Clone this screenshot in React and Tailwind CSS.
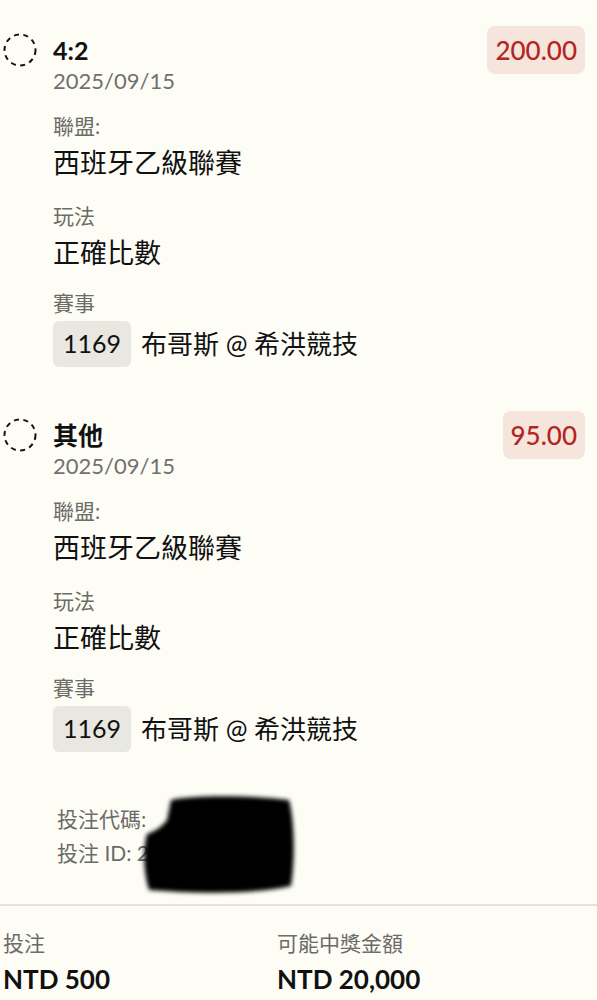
import React from "react";

const FONT = { fontFamily: 'Lato, "Noto Sans CJK TC", sans-serif' };

function DashedCircle() {
  return (
    <svg width="34" height="34" viewBox="0 0 34 34" className="shrink-0">
      <circle cx="17" cy="17" r="15.5" fill="none" stroke="#111" strokeWidth="2" strokeDasharray="5 4.5" />
    </svg>
  );
}

function Field({ label, children, className = "mt-[20px]" }) {
  return (
    <div className={className}>
      <div className="text-[21px] leading-[28px] text-[#6b6b68]">{label}</div>
      <div className="mt-[4px]">{children}</div>
    </div>
  );
}

function Bet({ title, amount, className = "" }) {
  return (
    <div className={"flex " + className}>
      <div className="w-[50px] shrink-0 pt-[3px]">
        <DashedCircle />
      </div>
      <div className="flex-1">
        <div className="flex items-center justify-between h-[40px]">
          <div className="text-[25px] font-bold leading-[40px] text-[#111]">{title}</div>
          <div className="-my-[4px] rounded-lg bg-[#f6e5dd] px-[8px] h-[48px] flex items-center text-[26px] font-medium text-[#b3261e]">
            {amount}
          </div>
        </div>
        <div className="text-[22px] leading-[22px] text-[#707070]">2025/09/15</div>
        <Field label="聯盟:">
          <div className="text-[27px] leading-[38px] text-[#111]">西班牙乙級聯賽</div>
        </Field>
        <Field label="玩法">
          <div className="text-[27px] leading-[38px] text-[#111]">正確比數</div>
        </Field>
        <Field label="賽事" className="mt-[17px]">
          <div className="flex items-center gap-[10px] mt-[2px]">
            <div className="h-[46px] rounded-md bg-[#e8e7e0] px-[10px] flex items-center text-[25px] text-[#111]">1169</div>
            <div className="text-[26px] text-[#111]">布哥斯 @ 希洪競技</div>
          </div>
        </Field>
      </div>
    </div>
  );
}

export default function App() {
  return (
    <div className="min-h-[1000px] w-[597px] bg-[#fdfdf6] overflow-hidden" style={FONT}>
      <div className="pl-[3px] pr-[12px] pt-[30px]">
        <Bet title="4:2" amount="200.00" />
        <Bet title="其他" amount="95.00" className="mt-[48px]" />
        <div className="relative mt-[50px] pl-[54px] text-[21px] leading-[34px] text-[#6b6b68]">
          <div>投注代碼: </div>
          <div>投注 ID: 24</div>
          <svg className="absolute left-[134px] top-[-10px]" width="162" height="110" viewBox="0 0 162 110">
            <defs>
              <filter id="blur" x="-10%" y="-10%" width="120%" height="120%">
                <feGaussianBlur stdDeviation="2.2" />
              </filter>
            </defs>
            <path
              d="M34 8 C 60 2, 120 4, 152 8 C 158 30, 158 70, 154 94 C 120 102, 60 102, 12 98 C 6 80, 6 55, 10 42 C 16 40, 24 36, 30 28 Z"
              fill="#000"
              filter="url(#blur)"
            />
          </svg>
        </div>
      </div>
      <div className="mt-[34px] h-[2px] bg-[#e4e3db]" />
      <div className="grid grid-cols-[274px_1fr] pl-[3px] pt-[22px]">
        <div>
          <div className="text-[21px] leading-[30px] text-[#6b6b68]">投注</div>
          <div className="mt-[4px] text-[26px] font-bold leading-[34px] text-[#111]">NTD 500</div>
        </div>
        <div>
          <div className="text-[21px] leading-[30px] text-[#6b6b68]">可能中獎金額</div>
          <div className="mt-[4px] text-[26px] font-bold leading-[34px] text-[#111]">NTD 20,000</div>
        </div>
      </div>
    </div>
  );
}
